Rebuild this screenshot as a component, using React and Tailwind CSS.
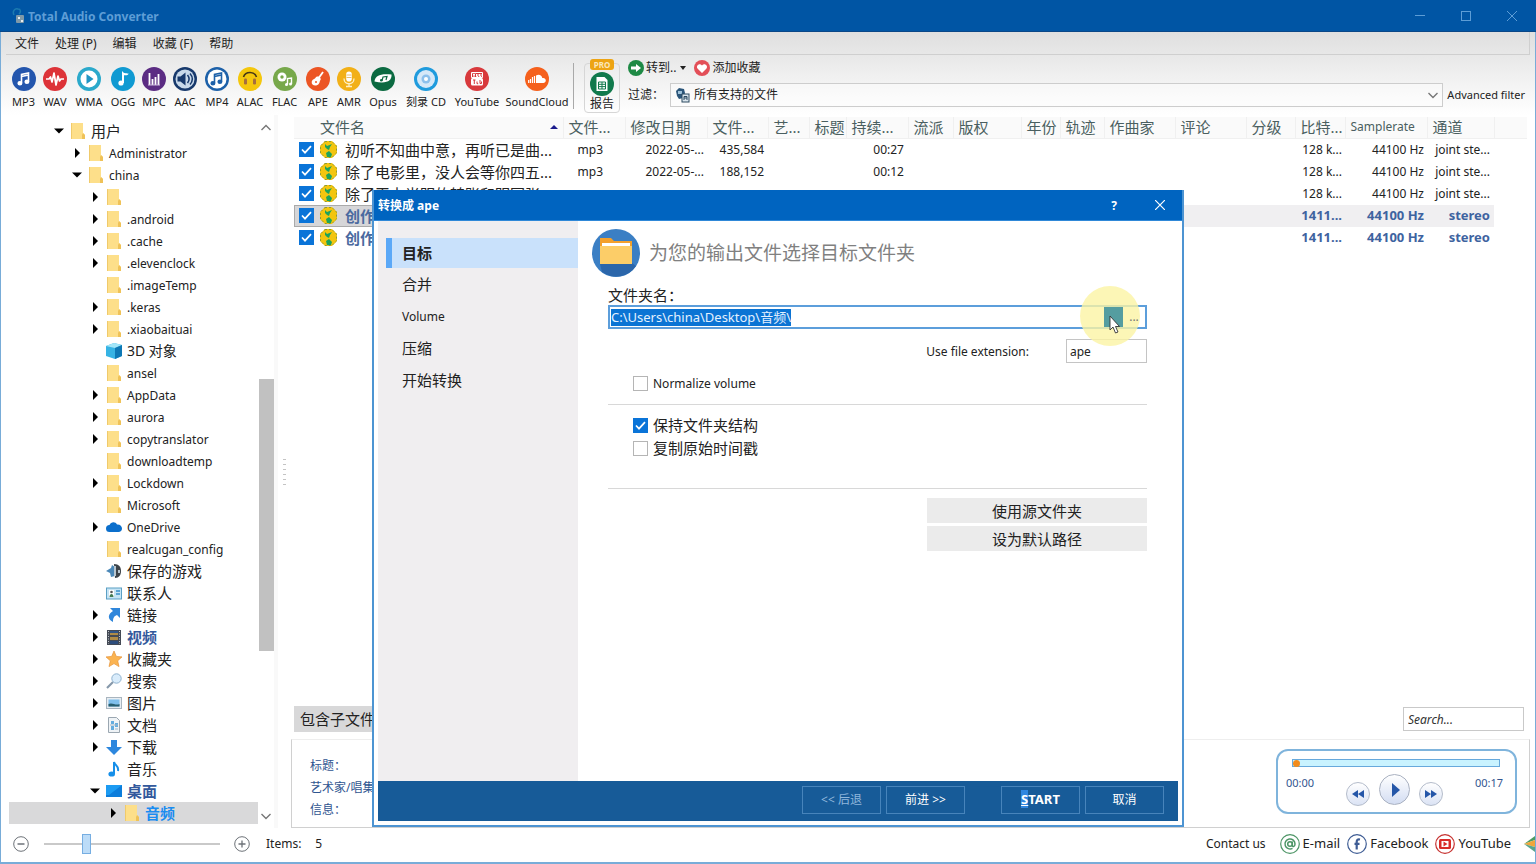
import React, { useEffect, useRef, useState } from "react";

const menus = ["文件", "处理 (P)", "编辑", "收藏 (F)", "帮助"];

const formats = [
  { id: "mp3", label: "MP3", width: "w-[31px]" },
  { id: "wav", label: "WAV", width: "w-[32px]" },
  { id: "wma", label: "WMA", width: "w-[36px]" },
  { id: "ogg", label: "OGG", width: "w-[32px]" },
  { id: "mpc", label: "MPC", width: "w-[30px]" },
  { id: "aac", label: "AAC", width: "w-[32px]" },
  { id: "mp4", label: "MP4", width: "w-[32px]" },
  { id: "alac", label: "ALAC", width: "w-[34px]" },
  { id: "flac", label: "FLAC", width: "w-[35px]" },
  { id: "ape", label: "APE", width: "w-[32px]" },
  { id: "amr", label: "AMR", width: "w-[30px]" },
  { id: "opus", label: "Opus", width: "w-[38px]" },
  { id: "cd", label: "刻录 CD", width: "w-[48px]" },
  { id: "youtube", label: "YouTube", width: "w-[54px]" },
  { id: "soundcloud", label: "SoundCloud", width: "w-[66px]" },
];

const tree = [
  { name: "用户", level: 0, arrow: "open" },
  { name: "Administrator", level: 1, arrow: "closed" },
  { name: "china", level: 1, arrow: "open" },
  { name: "", level: 2, arrow: "closed" },
  { name: ".android", level: 2, arrow: "closed" },
  { name: ".cache", level: 2, arrow: "closed" },
  { name: ".elevenclock", level: 2, arrow: "closed" },
  { name: ".imageTemp", level: 2 },
  { name: ".keras", level: 2, arrow: "closed" },
  { name: ".xiaobaituai", level: 2, arrow: "closed" },
  { name: "3D 对象", level: 2, icon: "cube", size: "text-sm" },
  { name: "ansel", level: 2 },
  { name: "AppData", level: 2, arrow: "closed" },
  { name: "aurora", level: 2, arrow: "closed" },
  { name: "copytranslator", level: 2, arrow: "closed" },
  { name: "downloadtemp", level: 2 },
  { name: "Lockdown", level: 2, arrow: "closed" },
  { name: "Microsoft", level: 2 },
  { name: "OneDrive", level: 2, arrow: "closed", icon: "cloud" },
  { name: "realcugan_config", level: 2 },
  { name: "保存的游戏", level: 2, icon: "games" },
  { name: "联系人", level: 2, icon: "contacts" },
  { name: "链接", level: 2, arrow: "closed", icon: "link" },
  { name: "视频", level: 2, arrow: "closed", icon: "video", color: "font-bold text-[#33599c]" },
  { name: "收藏夹", level: 2, arrow: "closed", icon: "star" },
  { name: "搜索", level: 2, arrow: "closed", icon: "search" },
  { name: "图片", level: 2, arrow: "closed", icon: "picture" },
  { name: "文档", level: 2, arrow: "closed", icon: "doc" },
  { name: "下载", level: 2, arrow: "closed", icon: "download" },
  { name: "音乐", level: 2, icon: "music" },
  { name: "桌面", level: 2, arrow: "open", icon: "desktop", color: "font-bold text-[#33599c]" },
  { name: "音频", level: 3, arrow: "closed", color: "font-bold text-[#1a8cf0]", selected: true },
];

const indent = ["pl-[45px]", "pl-[63px]", "pl-[81px]", "pl-[99px]"];

const columns = [
  { title: "文件名", width: "w-[269px]" },
  { title: "文件...", width: "w-[62px]" },
  { title: "修改日期", width: "w-[82px]" },
  { title: "文件...", width: "w-[61px]" },
  { title: "艺...", width: "w-[41px]" },
  { title: "标题", width: "w-[37px]" },
  { title: "持续...", width: "w-[62px]" },
  { title: "流派", width: "w-[45px]" },
  { title: "版权", width: "w-[68px]" },
  { title: "年份", width: "w-[39px]" },
  { title: "轨迹", width: "w-[44px]" },
  { title: "作曲家", width: "w-[71px]" },
  { title: "评论", width: "w-[71px]" },
  { title: "分级", width: "w-[49px]" },
  { title: "比特...", width: "w-[50px]" },
  { title: "Samplerate", width: "w-[82px]" },
  { title: "通道", width: "w-[67px]" },
];

const files = [
  { name: "初听不知曲中意，再听已是曲...", type: "mp3", date: "2022-05-...", size: "435,584", time: "00:27", rate: "128 k...", channel: "joint ste..." },
  { name: "除了电影里，没人会等你四五...", type: "mp3", date: "2022-05-...", size: "188,152", time: "00:12", rate: "128 k...", channel: "joint ste..." },
  { name: "除了天上光明的转账和明回张", rate: "128 k...", channel: "joint ste..." },
  { name: "创作", rate: "1411...", channel: "stereo", strong: true, selected: true },
  { name: "创作", rate: "1411...", channel: "stereo", strong: true },
];

const steps = ["目标", "合并", "Volume", "压缩", "开始转换"];

const isCjk = (text) => /[\u4e00-\u9fff]/.test(text);

const Note = ({ color }) => (
  <g stroke={color} strokeWidth="1.6" fill="none">
    <path d="M9.5 16V7.5l7-1.5v8.5M9.500 9.500l7-1.500" />
    <ellipse cx="7.900" cy="16.200" rx="1.700" ry="1.400" fill={color} />
    <ellipse cx="14.900" cy="14.800" rx="1.700" ry="1.400" fill={color} />
  </g>
);

const formatArt = {
  mp3: (
    <>
      <circle cx="12" cy="12" r="12" fill="#2456ad" />
      <Note color="#fff" />
    </>
  ),
  wav: (
    <>
      <circle cx="12" cy="12" r="12" fill="#dd3338" />
      <path d="M3 12h3l1.500-2 1.500 5 2-9 2 12 2-9 1.500 5 1.500-2h3" stroke="#fff" strokeWidth="1.700" fill="none" strokeLinejoin="round" />
    </>
  ),
  wma: (
    <>
      <circle cx="12" cy="12" r="12" fill="#2ba9cb" />
      <circle cx="12" cy="12" r="8.500" fill="#fff" />
      <path d="M9.500 7l7 5-7 5z" fill="#2196c4" />
    </>
  ),
  ogg: (
    <>
      <circle cx="12" cy="12" r="12" fill="#109ad2" />
      <path d="M12 16V6.500c1 1 4.500 1 4.500 0" stroke="#fff" strokeWidth="2" fill="none" />
      <circle cx="10" cy="16" r="2.600" fill="#fff" />
    </>
  ),
  mpc: (
    <>
      <circle cx="12" cy="12" r="12" fill="#5b2c83" />
      <path d="M7.500 6v12M10.500 12v6M13.500 10v8M16.500 7v11" stroke="#fff" strokeWidth="1.800" />
      <path d="M6 18h12" stroke="#cdb9de" />
    </>
  ),
  aac: (
    <>
      <circle cx="12" cy="12" r="12" fill="#17396c" />
      <circle cx="12" cy="12" r="9.500" fill="#c8d9ea" />
      <path d="M4.500 9.500h3l5-4v13l-5-4h-3z" fill="#17396c" />
      <path d="M14.500 8c2 2.500 2 5.500 0 8M17 6.500c3 3.500 3 7.500 0 11" stroke="#17396c" strokeWidth="1.500" fill="none" />
    </>
  ),
  mp4: (
    <>
      <circle cx="12" cy="12" r="12" fill="#1d61a9" />
      <circle cx="12" cy="12" r="9.500" fill="#fff" />
      <Note color="#1d61a9" />
    </>
  ),
  alac: (
    <>
      <circle cx="12" cy="12" r="12" fill="#f4c70d" />
      <path d="M5.500 10c2-6 11-6 13 0" stroke="#453718" strokeWidth="1.600" fill="none" />
      <rect x="6" y="11.500" width="3" height="6" rx="1.200" fill="#a66f3d" />
      <rect x="15" y="11.500" width="3" height="6" rx="1.200" fill="#a66f3d" />
    </>
  ),
  flac: (
    <>
      <circle cx="12" cy="12" r="12" fill="#77a84b" />
      <circle cx="9" cy="10" r="4.500" fill="#fff" />
      <circle cx="9" cy="10" r="1.700" fill="#77a84b" />
      <path d="M14.500 17.500v-6l4-.5v6" stroke="#fff" strokeWidth="1.400" fill="none" />
      <circle cx="13.500" cy="17.500" r="1.500" fill="#fff" />
      <circle cx="17.500" cy="17" r="1.500" fill="#fff" />
    </>
  ),
  ape: (
    <>
      <circle cx="12" cy="12" r="12" fill="#ec5524" />
      <path d="M12 12l5-7" stroke="#fff" strokeWidth="1.800" />
      <path d="M11 9.500c2-.5 4.500 1.500 3.500 3.500-1 1-.5 2-1.500 3.500-1.500 2.500-5 2.500-6.500 1s-1-4.500 1.500-5.500c1.500-.5 1.500-2 3-2.500z" fill="#fff" />
      <circle cx="10" cy="15" r="1" fill="#ec5524" />
    </>
  ),
  amr: (
    <>
      <circle cx="12" cy="12" r="12" fill="#f2b017" />
      <rect x="9.200" y="4.500" width="5.600" height="10" rx="2.800" fill="#fff" />
      <path d="M7 11.500c0 7 10 7 10 0M12 16.500v3M9 19.500h6" stroke="#fdf0c8" strokeWidth="1.300" fill="none" />
      <path d="M9.500 8h5M9.500 10.500h5" stroke="#e0b050" strokeWidth=".8" />
    </>
  ),
  opus: (
    <>
      <circle cx="12" cy="12" r="12" fill="#0b6a41" />
      <path d="M3.500 14.500C4 8 10 6.500 20.500 7.500 21 14 15.500 17 3.500 14.500z" fill="#fff" />
      <path d="M11 13.500l1-3.500 4-.5-1 3.500" stroke="#0b6a41" strokeWidth="1.200" fill="none" />
      <circle cx="10.300" cy="13.300" r="1.300" fill="#0b6a41" />
    </>
  ),
  cd: (
    <>
      <circle cx="12" cy="12" r="12" fill="#1f9bdd" />
      <circle cx="12" cy="12" r="9" fill="#d5e8f8" />
      <circle cx="12" cy="12" r="4.500" fill="#8cc0ec" />
      <circle cx="12" cy="12" r="2" fill="#fff" />
    </>
  ),
  youtube: (
    <>
      <circle cx="12" cy="12" r="12" fill="#d8393c" />
      <path d="M6.500 5.500h11v5h-11z" fill="none" stroke="#fff" />
      <rect x="6" y="11" width="12" height="7.500" rx="1.500" fill="#fff" />
      <path d="M8 6.500l1 2 1-2M9 8v2M11.500 7v2.500h1.500V7M14.500 7v2.500h1.500V7" stroke="#fff" fill="none" />
      <path d="M8 13h2.500M9.300 13v4M12 14.500v2.200h1.200M15 13v3.500h1.500v-2" stroke="#d8393c" fill="none" />
    </>
  ),
  soundcloud: (
    <>
      <circle cx="12" cy="12" r="12" fill="#f5601c" />
      <path d="M11 16V8.500c3-2 6-.2 6.300 2.500 2-.5 3.500.8 3.500 2.500 0 1.500-1.200 2.500-2.500 2.500z" fill="#fff" />
      <path d="M9.500 9v7M7.500 10v6M5.500 12v4M3.700 13v3" stroke="#fff" strokeWidth="1.200" />
    </>
  ),
};

const treeArt = {
  folder: (
    <>
      <path d="M1 0h12v10l2 2v4H1z" fill="#fddf8a" />
      <path d="M1 0h1v16H1z" fill="#f0ca6b" />
      <path d="M13 10l2 2v4h-3v-4z" fill="#efc258" />
    </>
  ),
  cube: (
    <>
      <path d="M0 3l8-3 8 2v11l-7 3-9-3z" fill="#36b3e4" />
      <path d="M0 3l9 2 7-3-8-2z" fill="#a3e6f8" />
      <path d="M9 5l7-3v11l-7 3z" fill="#0d78b5" />
    </>
  ),
  cloud: <path d="M3.500 13a3.500 3.500 0 010-7C5 2.500 9.500 2.500 11 5.500c3-.3 5 1.500 5 4 0 2-1.500 3.500-3.500 3.500z" fill="#0b6fcc" />,
  games: (
    <>
      <path d="M8 1c5 0 7 3 7 7s-2 7-6 7z" fill="#3d4349" />
      <path d="M0 8l5-3 1-3 3 2v9l-4 1-1-4z" fill="#4b88b8" />
      <path d="M8 3h2v10H8zM12 7h2v3h-2z" fill="#b8c6d0" />
    </>
  ),
  contacts: (
    <>
      <rect x=".5" y="3" width="15" height="11" fill="#c6e4f5" stroke="#5b9fc4" />
      <rect x="3" y="5" width="5" height="7" fill="#fff" />
      <path d="M3.500 12c0-4 4-4 4 0z" fill="#467c54" />
      <circle cx="5.500" cy="7" r="1.300" fill="#555" />
      <path d="M10 6h4M10 9h4" stroke="#3a8fc9" strokeWidth="1.500" />
    </>
  ),
  link: <path d="M4 1h10v10l-3-3c-3 1-4 3-4 7-6-3-5-8 0-11z" fill="#2f86db" />,
  video: (
    <>
      <rect x="1" y="1" width="14" height="15" fill="#444a55" />
      <path d="M4 2h8v4H4z" fill="#2f5488" />
      <path d="M4 4h8v2H4zM4 8h8v3H4z" fill="#b08b45" />
      <path d="M4 12h8v3H4z" fill="#2d4d7c" />
      <path d="M2.500 2v13M13.500 2v13" stroke="#bfc4cb" strokeDasharray="1 1.500" />
    </>
  ),
  star: <path d="M8 0l2.300 5.400 5.700.5-4.300 3.900 1.300 5.800L8 12.600l-5 3 1.300-5.800L0 5.900l5.700-.5z" fill="#fbb451" stroke="#e5933a" strokeWidth=".7" />,
  search: (
    <>
      <path d="M1 15l6-6" stroke="#8698aa" strokeWidth="2.200" />
      <circle cx="10.500" cy="5.500" r="4.700" fill="#d9ecfb" stroke="#8fb2cf" />
    </>
  ),
  picture: (
    <>
      <rect x=".5" y="2.500" width="15" height="11" fill="#e7edf2" stroke="#a9b5bf" />
      <rect x="2.500" y="4.500" width="11" height="7" fill="#7fbfec" />
      <path d="M2.500 9c4-2 7 2 11 0v2.500h-11z" fill="#285f70" />
    </>
  ),
  doc: (
    <>
      <path d="M2.500.500h8l3 3v12h-11z" fill="#eff3f6" stroke="#9ba7b1" />
      <path d="M5 4h3v3H5zM9 6h3v4H9zM5 9h3v4H5z" fill="#63acdf" />
      <path d="M4 8h8M9 12h3" stroke="#9bb5c9" />
    </>
  ),
  download: <path d="M5 1h6v7h5l-8 8-8-8h5z" fill="#2d87de" />,
  music: (
    <>
      <path d="M8 13V1c1 4 5 3 4 9" fill="none" stroke="#168fe9" strokeWidth="2" />
      <ellipse cx="5.700" cy="13" rx="3.300" ry="2.600" fill="#168fe9" />
    </>
  ),
  desktop: (
    <>
      <path d="M0 2h16v12H0z" fill="#0c7ddb" />
      <path d="M0 2h16L3 12H0z" fill="#1c9bf2" />
    </>
  ),
};

const Chevron = ({ up }) => (
  <svg viewBox="0 0 12 8" className="w-3 h-2" fill="none" stroke="#777" strokeWidth="1.400">
    <path d={up ? "M1.500 6L6 1.500 10.500 6" : "M1.500 2L6 6.500 10.500 2"} />
  </svg>
);

const Check = ({ label, defaultChecked, hideLabel, className }) => (
  <label className={`flex items-center gap-[5px] w-fit ${className || ""}`}>
    <span className="relative w-[15px] h-[15px] shrink-0">
      <input
        type="checkbox"
        defaultChecked={defaultChecked}
        aria-label={hideLabel ? label : undefined}
        className="peer block appearance-none w-[15px] h-[15px] border border-[#b5b5b5] bg-white checked:bg-[#0a74d8] checked:border-[#0a74d8]"
      />
      <svg viewBox="0 0 15 15" className="absolute inset-0 hidden peer-checked:block pointer-events-none" fill="none" stroke="#fff" strokeWidth="1.700">
        <path d="M3 7.500l3 3.200 6-6.500" />
      </svg>
    </span>
    {!hideLabel && <span>{label}</span>}
  </label>
);

const TitleBar = () => (
  <header className="flex items-center justify-between h-8 shrink-0 bg-[#0055a4] border-b border-[#0a4787] pl-3 pr-[19px] text-[#5d9dd6]">
    <div className="flex items-center gap-1">
      <svg viewBox="0 0 12 16" className="w-3 h-4">
        <path d="M2 7c-2-4 1-7 4-6 3 0 3 3 1 5" fill="none" stroke="#1c7bb0" strokeWidth="1.500" />
        <rect x="4" y="7" width="8" height="8" rx="1" fill="#7f99a8" />
        <path d="M6 9h2v2H6zM9 12h2v2H9z" fill="#e8edf0" />
      </svg>
      <h1 className="pt-[2px] text-xs font-bold">Total Audio Converter</h1>
    </div>
    <div className="flex items-center gap-9">
      <button aria-label="Minimize" className="w-[10px] h-[10px] flex items-center"><span className="w-full h-px bg-[#5d9dd6]" /></button>
      <button aria-label="Maximize" className="w-[10px] h-[10px] border border-[#5d9dd6]" />
      <button aria-label="Close" className="w-[10px] h-[10px]">
        <svg viewBox="0 0 10 10" stroke="#5d9dd6"><path d="M0 0l10 10M10 0L0 10" /></svg>
      </button>
    </div>
  </header>
);

const Toolbar = () => (
  <div className="flex items-start h-[60px] pl-[7px] pr-[10px]">
    {formats.map((f) => (
      <button key={f.id} className={`${f.width} shrink-0 flex flex-col items-center pt-3 text-[11px] leading-[14px] whitespace-nowrap`}>
        <svg viewBox="0 0 24 24" className="w-6 h-6 mb-1">{formatArt[f.id]}</svg>
        {f.label}
      </button>
    ))}
    <div className="w-px h-[46px] mt-2 ml-[3px] bg-[#a9a9a9]" />
    <button className="relative w-9 h-[50px] mt-2 ml-[10px] shrink-0 rounded border border-[#d6d6d6] flex flex-col items-center justify-end pb-px text-xs leading-[15px]">
      <span className="absolute -top-[5px] w-6 h-[11px] rounded-[3px] bg-[#eda414] text-[8px] leading-[11px] font-bold text-[#fbe7bb]">PRO</span>
      <svg viewBox="0 0 24 24" className="w-6 h-6 shrink-0">
        <circle cx="12" cy="12" r="12" fill="#117a4c" />
        <path d="M6.500 5h8l3 3v11h-11z" fill="#fff" />
        <path d="M8.500 10h7v7h-7zM8.500 12.300h7M8.500 14.600h7M12 10v7" stroke="#117a4c" fill="none" />
      </svg>
      报告
    </button>
    <div className="flex-1 min-w-0 pl-2 pt-[3px]">
      <div className="flex items-center gap-2 h-5 text-xs">
        <button className="flex items-center gap-[2px]">
          <svg viewBox="0 0 16 16" className="w-4 h-4">
            <circle cx="8" cy="8" r="8" fill="#1e8a45" />
            <path d="M3 6.500h5V4l5 4-5 4V9.500H3z" fill="#fff" />
          </svg>
          转到..
          <svg viewBox="0 0 6 4" className="w-[6px] h-1 ml-[2px]"><path d="M0 0h6L3 4z" fill="#222" /></svg>
        </button>
        <button className="flex items-center gap-[2px]">
          <svg viewBox="0 0 16 16" className="w-4 h-4">
            <circle cx="8" cy="8" r="8" fill="#e34f58" />
            <path d="M8 13L3.500 8.500C1.500 6 5.500 2.500 8 5.500c2.500-3 6.500.5 4.500 3z" fill="#fff" />
          </svg>
          添加收藏
        </button>
      </div>
      <div className="flex items-center mt-[5px] text-xs">
        <label htmlFor="filter" className="w-[42px] shrink-0">过滤：</label>
        <div className="relative flex-1">
          <select id="filter" className="block appearance-none w-full h-6 pl-[23px] text-xs bg-white/40 border border-[#cdcdcd]">
            <option>所有支持的文件</option>
          </select>
          <svg viewBox="0 0 16 16" className="absolute left-[5px] top-1 w-4 h-4 pointer-events-none">
            <path d="M1 4l3-3 5 1 1 4-2 5-4 1-2-3z" fill="#2c567a" />
            <path d="M3 4h4v3H3z" fill="#9fc2da" />
            <rect x="7" y="7" width="7" height="8" fill="#dbe6ee" stroke="#2d4a61" />
            <path d="M9 13V9.500h3V13M9 11h3" stroke="#2d4a61" fill="none" />
          </svg>
          <span className="absolute right-1 top-2 pointer-events-none"><Chevron /></span>
        </div>
        <button className="ml-1 text-[11px]">Advanced filter</button>
      </div>
    </div>
  </div>
);

const FolderTree = () => (
  <aside className="w-[273px] shrink-0 flex">
    <ul className="flex-1 ml-2 pt-[5px]">
      {tree.map((item, i) => (
        <li key={i} className={`flex items-center h-[22px] ${indent[item.level]} ${item.selected ? "bg-[#d9d9da]" : ""}`}>
          <span className="w-4 shrink-0">
            {item.arrow && (
              <svg viewBox="0 0 10 10" className="w-[10px] h-[10px]">
                <path d={item.arrow === "open" ? "M0 2.500h10L5 7.500z" : "M3 0l5 5-5 5z"} fill="#000" />
              </svg>
            )}
          </span>
          <svg viewBox="0 0 16 16" className="w-4 h-4 shrink-0 mr-[5px]">{treeArt[item.icon || "folder"]}</svg>
          <span className={`leading-5 whitespace-nowrap ${item.size || (isCjk(item.name) ? "text-[15px]" : "pt-[2px] text-xs")} ${item.color || ""}`}>{item.name}</span>
        </li>
      ))}
    </ul>
    <div className="w-4 flex flex-col items-center pt-[9px] pb-2">
      <Chevron up />
      <div className="grow-[244]" />
      <div className="w-[15px] grow-[269] bg-[#c1c1c1]" />
      <div className="grow-[159]" />
      <Chevron />
    </div>
  </aside>
);

const FileIcon = () => (
  <svg viewBox="0 0 17 17" className="w-[17px] h-[17px] shrink-0">
    <path d="M5 0h7l5 5v7l-5 5H5l-5-5V5z" fill="#f3c50f" />
    <path d="M5 .5h7l4.500 4.500v7L12 16.500H5L.5 12V5z" fill="none" stroke="#8f9a35" strokeDasharray="2 2" />
    <path d="M5 3l2 2 5-2-2 3-1 3-2-1-2-2zM6 12l3-2 3 3-1 3H7z" fill="#1ca35c" />
  </svg>
);

const FileTable = () => (
  <table className="w-full table-fixed border-collapse text-xs text-left whitespace-nowrap">
    <thead>
      <tr className="h-[21px] bg-[#fafafa] text-[#4a5f60]">
        {columns.map((c, i) => (
          <th
            key={i}
            className={`${c.width} p-0 border-r border-b border-[#f0f0f0] font-normal overflow-hidden leading-5 ${i === 0 ? "pl-[26px]" : "pl-[5px]"} ${isCjk(c.title) ? "text-[15px]" : "text-xs"}`}
          >
            {i === 0 ? (
              <div className="flex items-center justify-between pr-[5px]">
                {c.title}
                <svg viewBox="0 0 8 4" className="w-2 h-1"><path d="M4 0l4 4H0z" fill="#1b1b8c" /></svg>
              </div>
            ) : (
              c.title
            )}
          </th>
        ))}
        <th className="p-0 border-b border-[#f0f0f0]" />
      </tr>
    </thead>
    <tbody>
      {files.map((f, i) => {
        const tone = `p-0 text-right ${f.selected ? "bg-[#f0eff1]" : ""} ${f.strong ? "text-[13px] font-bold text-[#3e63a0]" : ""}`;
        return (
          <tr key={i} className="h-[22px]">
            <td className={`p-0 overflow-hidden ${f.selected ? "bg-[#d6d6d8] outline outline-[#aaa] -outline-offset-1" : ""}`}>
              <div className="flex items-center pl-[5px] h-[22px]">
                <Check label={f.name} hideLabel defaultChecked className="mr-[6px]" />
                <FileIcon />
                <span className={`ml-2 text-[15px] leading-5 ${f.strong ? "font-bold text-[#4a6a9f]" : ""}`}>{f.name}</span>
              </div>
            </td>
            <td className={`${tone} pr-[22px]`}>{f.type}</td>
            <td className={`${tone} pr-[3px]`}>{f.date}</td>
            <td className={`${tone} pr-1`}>{f.size}</td>
            <td colSpan={2} className={tone} />
            <td className={`${tone} pr-1`}>{f.time}</td>
            <td colSpan={7} className={tone} />
            <td className={`${tone} pr-[3px]`}>{f.rate}</td>
            <td className={`${tone} pr-[3px]`}>44100 Hz</td>
            <td className={`${tone} pr-1`}>{f.channel}</td>
            <td />
          </tr>
        );
      })}
    </tbody>
  </table>
);

const Player = () => (
  <div className="w-[241px] h-[65px] rounded-xl border-2 border-[#7fb4dc] px-2 pt-2 text-[11px] text-[#33568f]">
    <input
      type="range"
      aria-label="Position"
      defaultValue="0"
      className="block appearance-none w-[208px] h-2 ml-[6px] bg-[#c9f3ff] border border-[#67a9dc] [&::-webkit-slider-thumb]:appearance-none [&::-webkit-slider-thumb]:w-[7px] [&::-webkit-slider-thumb]:h-[7px] [&::-webkit-slider-thumb]:rounded-full [&::-webkit-slider-thumb]:bg-[#f28c1d]"
    />
    <div className="flex justify-between">
      <span className="pt-2">00:00</span>
      <div className="flex items-center gap-[9px] pt-[6px]">
        <button aria-label="Rewind" className="w-6 h-6 mt-[9px] rounded-full border border-[#b4bccb] bg-linear-to-b from-white to-[#dbe3f4] flex items-center justify-center">
          <svg viewBox="0 0 12 8" className="w-3 h-2" fill="#2456a8"><path d="M6 0v8L0 4zM12 0v8L6 4z" /></svg>
        </button>
        <button aria-label="Play" className="w-[31px] h-[31px] rounded-full border border-[#a9b1c1] bg-linear-to-b from-white to-[#d3ddf2] flex items-center justify-center">
          <svg viewBox="0 0 10 14" className="w-[10px] h-[14px] ml-[2px]" fill="#2456a8"><path d="M1 0l8 7-8 7z" /></svg>
        </button>
        <button aria-label="Forward" className="w-6 h-6 mt-[9px] rounded-full border border-[#b4bccb] bg-linear-to-b from-white to-[#dbe3f4] flex items-center justify-center">
          <svg viewBox="0 0 12 8" className="w-3 h-2" fill="#2456a8"><path d="M0 0v8l6-4zM6 0v8l6-4z" /></svg>
        </button>
      </div>
      <span className="pt-2 pr-1">00:17</span>
    </div>
  </div>
);

const StatusBar = () => (
  <footer className="flex items-center h-[34px] shrink-0 pl-3 pb-[3px] text-xs">
    <button aria-label="Zoom out">
      <svg viewBox="0 0 16 16" className="w-4 h-4" fill="none" stroke="#6d7278"><circle cx="8" cy="8" r="7.300" /><path d="M4.500 8h7" strokeWidth="1.500" /></svg>
    </button>
    <input
      type="range"
      aria-label="Zoom"
      defaultValue="23"
      className="appearance-none w-44 h-[2px] ml-[15px] mr-[14px] bg-[#c9c9c9] [&::-webkit-slider-thumb]:appearance-none [&::-webkit-slider-thumb]:w-[9px] [&::-webkit-slider-thumb]:h-5 [&::-webkit-slider-thumb]:border [&::-webkit-slider-thumb]:border-[#76aee2] [&::-webkit-slider-thumb]:bg-[#bcdcf8]"
    />
    <button aria-label="Zoom in">
      <svg viewBox="0 0 16 16" className="w-4 h-4" fill="none" stroke="#6d7278"><circle cx="8" cy="8" r="7.300" /><path d="M4.500 8h7M8 4.500v7" strokeWidth="1.300" /></svg>
    </button>
    <span className="ml-4">Items:</span>
    <span className="ml-[14px]">5</span>
    <nav className="ml-auto flex items-center text-[13px]">
      <a href="#contact" className="mr-[14px] text-xs">Contact us</a>
      <a href="#email" className="flex items-center gap-[3px] mr-[7px]">
        <svg viewBox="0 0 20 20" className="w-5 h-5" fill="none" stroke="#4d9566">
          <circle cx="10" cy="10" r="9.300" strokeWidth="1.200" />
          <circle cx="10" cy="10" r="2.300" strokeWidth="1.500" />
          <path d="M12.300 7.500v4c0 1.500 2.700 1.500 2.700-1.500a5 5 0 10-2.500 4.300" strokeWidth="1.500" />
        </svg>
        E-mail
      </a>
      <a href="#facebook" className="flex items-center gap-[3px] mr-[7px]">
        <svg viewBox="0 0 20 20" className="w-5 h-5" fill="none" stroke="#3e5c94">
          <circle cx="10" cy="10" r="9.300" strokeWidth="1.200" />
          <path d="M13 5.500c-2.500-.5-3.300.5-3.300 2.500v7.500M7.500 9.800h5" strokeWidth="2.200" />
        </svg>
        Facebook
      </a>
      <a href="#youtube" className="flex items-center gap-[3px] mr-[13px]">
        <svg viewBox="0 0 20 20" className="w-5 h-5">
          <circle cx="10" cy="10" r="9.300" fill="none" stroke="#c6312f" strokeWidth="1.200" />
          <rect x="4" y="5" width="12" height="10" rx="1.500" fill="#d92b28" />
          <rect x="6.500" y="7" width="7" height="6" fill="#fff" />
          <path d="M8.500 7.500l4 2.500-4 2.500z" fill="#d92b28" />
        </svg>
        YouTube
      </a>
      <svg viewBox="0 0 11 16" className="w-[11px] h-4">
        <path d="M0 8l11-8v4z" fill="#4d9c62" />
        <path d="M0 8l11-4v7z" fill="#f0a63a" />
        <path d="M0 8l11 3v5z" fill="#5aa58b" />
      </svg>
    </nav>
  </footer>
);

const ConvertDialog = () => {
  const [step, setStep] = useState(0);
  const pathRef = useRef(null);

  useEffect(() => {
    pathRef.current.focus();
    pathRef.current.select();
  }, []);

  return (
    <section role="dialog" aria-label="转换成 ape" className="absolute left-[372px] top-[190px] w-[812px] h-[637px] flex flex-col bg-white border-2 border-t-0 border-[#4d94d2]">
      <div className="flex items-center h-[31px] shrink-0 pl-1 pr-[17px] bg-[#0064c0] border-b border-[#2f88d8] text-white text-xs">
        <h2 className="font-bold flex-1 pt-[2px]">转换成 ape</h2>
        <button aria-label="Help" className="w-3 mr-[35px] pt-px font-bold">?</button>
        <button aria-label="Close" className="w-[10px] h-[10px]">
          <svg viewBox="0 0 10 10" stroke="#fff" strokeWidth="1.200"><path d="M0 0l10 10M10 0L0 10" /></svg>
        </button>
      </div>
      <div className="flex flex-1 mx-1">
        <nav className="w-[200px] shrink-0 pt-[17px] pl-2 bg-[#f0eef0]">
          {steps.map((s, i) => (
            <button
              key={s}
              onClick={() => setStep(i)}
              className={`block w-full text-left ${isCjk(s) ? "text-[15px]" : "pt-[2px] text-xs"} ${step === i ? "h-[30px] border-l-[6px] border-[#5ba8f7] pl-[10px] bg-[#c9e1fb] font-bold" : "h-8 pl-4"}`}
            >
              {s}
            </button>
          ))}
        </nav>
        <div className="flex-1 pl-[14px] pr-[31px] pt-2">
          <div className="flex items-center gap-[9px]">
            <svg viewBox="0 0 48 48" className="w-12 h-12">
              <circle cx="24" cy="24" r="24" fill="#3b7fc4" />
              <path d="M8 35l32-1 4 3a24 24 0 01-34 6z" fill="#2b66aa" />
              <path d="M8 9h11l3 3h18v22H8z" fill="#f3a02c" />
              <path d="M10 14h28v6H10z" fill="#fff" />
              <path d="M8 17h32v18H8z" fill="#fccd68" />
            </svg>
            <h3 className="text-[19px] text-[#808080]">为您的输出文件选择目标文件夹</h3>
          </div>
          <div className="pl-4">
            <label htmlFor="folder" className="block mt-2 text-[15px] leading-5">文件夹名：</label>
            <div className="relative flex h-6 border-2 border-[#5c9edb]">
              <input
                id="folder"
                ref={pathRef}
                defaultValue={"C:\\Users\\china\\Desktop\\音频\\"}
                className="flex-1 min-w-0 px-px text-[13px] leading-[17px] outline-none selection:bg-[#0b74d4] selection:text-[#e3f1ff]"
              />
              <div className="absolute -top-[21px] right-[5px] w-[60px] h-[60px] rounded-full bg-[#fbf4a4]/80" />
              <button aria-label="Choose recent folder" className="relative w-[19px] bg-[#559da0]">
                <svg viewBox="0 0 12 19" className="absolute left-[5px] top-2 w-3 h-[19px]">
                  <path d="M1 1v14l3-3 2.500 6 2.500-1-2.500-5.500h4z" fill="#fff" stroke="#333" strokeWidth=".9" />
                </svg>
              </button>
              <button aria-label="Browse" className="relative w-[22px] text-xs leading-4 text-[#777]">...</button>
            </div>
            <div className="flex items-center justify-end mt-[10px]">
              <label htmlFor="ext" className="mr-[37px] pt-px text-xs">Use file extension:</label>
              <input id="ext" defaultValue="ape" className="w-[81px] h-6 px-[3px] text-xs border border-[#c4c4c4]" />
            </div>
            <Check label="Normalize volume" className="mt-[11px] ml-[25px] h-[19px] text-xs" />
            <hr className="mt-[11px] border-[#d8d8d8]" />
            <Check label="保持文件夹结构" defaultChecked className="mt-2 ml-[25px] h-6 text-[15px]" />
            <Check label="复制原始时间戳" className="ml-[25px] h-[23px] text-[15px]" />
            <hr className="mt-7 border-[#d8d8d8]" />
            <div className="flex flex-col items-end gap-[3px] mt-[9px] text-[15px]">
              <button className="w-[220px] h-[25px] leading-6 bg-[#ebebeb]">使用源文件夹</button>
              <button className="w-[220px] h-[25px] leading-6 bg-[#ebebeb]">设为默认路径</button>
            </div>
          </div>
        </div>
      </div>
      <div className="flex items-center justify-end h-10 shrink-0 mx-1 mb-1 pr-[14px] pb-[2px] bg-[#175b98] text-xs text-white">
        <button className="w-[79px] h-7 border border-[#4784bb] text-[#8fb7dc]">&lt;&lt; 后退</button>
        <button className="w-[79px] h-7 ml-[5px] border border-[#4784bb]">前进 &gt;&gt;</button>
        <button className="w-[79px] h-7 ml-9 border border-[#4784bb] text-[13px] font-bold"><u className="bg-[#2f86e0]">S</u>TART</button>
        <button className="w-[79px] h-7 ml-[5px] border border-[#4784bb]">取消</button>
      </div>
    </section>
  );
};

const App = () => {
  return (
    <div className="relative min-h-screen flex flex-col overflow-hidden bg-white text-[#222] font-['Noto_Sans','Noto_Sans_CJK_SC',sans-serif]">
      <TitleBar />
      <div className="flex-1 flex flex-col border-x border-b-2 border-[#78acd8]">
        <div className="shrink-0 bg-linear-to-b from-[#dfdfdf] to-white">
          <nav className="flex items-center gap-4 h-[23px] mx-[5px] pl-[9px] pt-[2px] border-b border-r border-[#cfcfcf] text-xs">
            {menus.map((m) => (
              <button key={m}>{m}</button>
            ))}
          </nav>
          <Toolbar />
        </div>
        <div className="flex-1 flex">
          <FolderTree />
          <div className="w-[17px] shrink-0 flex flex-col items-center justify-center gap-1 border-l-4 border-[#f9f9f9]">
            {[0, 1, 2, 3, 4, 5].map((n) => (
              <span key={n} className="w-[3px] h-px bg-[#c4c4c4]" />
            ))}
          </div>
          <main className="flex-1 min-w-0 flex flex-col pr-[5px]">
            <div className="flex-1 pt-[2px] pl-[3px] pr-[3px]">
              <FileTable />
            </div>
            <div className="flex items-center justify-between pl-[3px] pr-[6px] pb-[7px]">
              <button className="w-[120px] h-[26px] pl-[6px] text-left text-[15px] bg-[#d8d8d9]">包含子文件夹</button>
              <input aria-label="Search" placeholder="Search..." className="w-[121px] h-6 px-1 text-xs italic border border-[#c9c9c9] placeholder:text-[#333]" />
            </div>
            <div className="flex justify-between h-[89px] border border-t-[#eee] border-[#d0d0d0] pl-[18px] pr-3 pt-[9px]">
              <dl className="pt-[6px] text-xs leading-[22px] text-[#2f5590]">
                <dt>标题：</dt>
                <dt>艺术家/唱集</dt>
                <dt>信息：</dt>
              </dl>
              <Player />
            </div>
          </main>
        </div>
        <StatusBar />
      </div>
      <ConvertDialog />
    </div>
  );
};

export default App;
